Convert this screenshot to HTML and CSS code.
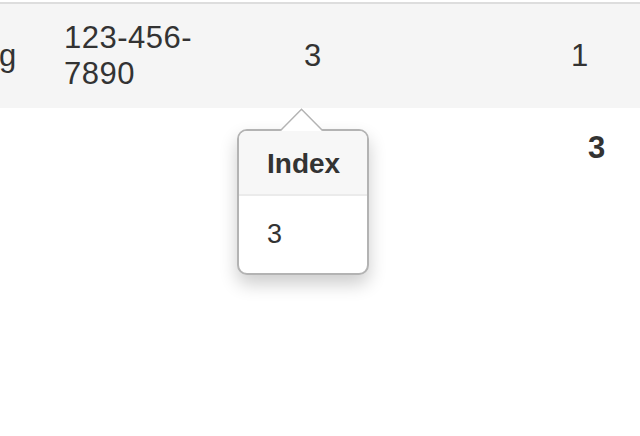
FILE: index.html
```html
<!DOCTYPE html>
<html>
<head>
<meta charset="utf-8">
<link rel="stylesheet" href="styles.css">
</head>
<body>
<div class="page">
  <div class="table">
    <div class="row row-main">
      <div class="cell c1">g</div>
      <div class="cell c2"><span class="wrap">123-456-7890</span></div>
      <div class="cell c3">3</div>
      <div class="cell c4">1</div>
    </div>
    <div class="row row-total">
      <div class="cell c1"></div>
      <div class="cell c2"></div>
      <div class="cell c3"></div>
      <div class="cell c4 total">3</div>
    </div>
  </div>
  <div class="popover">
    <svg class="arrow" width="44" height="24" viewBox="0 0 44 24">
      <polygon points="0.5,23 21.5,1.2 42.5,23" fill="#fff"/>
      <polyline points="0.5,22.5 21.5,1.2 42.5,22.5" fill="none" stroke="#b3b3b3" stroke-width="1.5"/>
    </svg>
    <div class="pop-title">Index</div>
    <div class="pop-content">3</div>
  </div>
</div>
</body>
</html>
```

FILE: styles.css
```css
html, body {
  margin: 0;
  padding: 0;
  background: #fff;
}
body {
  font-family: "Liberation Sans", Arial, sans-serif;
  color: #333;
}
.page {
  position: relative;
  width: 640px;
  height: 436px;
  overflow: hidden;
}
.table {
  margin-top: 2px;
  border-top: 2px solid #dddddd;
}
.row {
  display: grid;
  grid-template-columns: 64px 240px 267px 69px;
  font-size: 31px;
  line-height: 36px;
}
.row-main {
  background: #f5f5f5;
  height: 104px;
  align-items: center;
}
.row-total {
  padding-top: 22px;
  height: 60px;
}
.cell {
  white-space: nowrap;
}
.c2 {
  white-space: normal;
}
.wrap {
  display: block;
  width: 150px;
  letter-spacing: 0.5px;
}
.c1 {
  margin-left: -1px;
}
.total {
  font-weight: bold;
  padding-left: 17px;
}
.popover {
  position: absolute;
  left: 237px;
  top: 129px;
  width: 128px;
  height: 142px;
  background: #fff;
  border: 2px solid #b3b3b3;
  border-radius: 10px;
  box-shadow: 0 9px 18px rgba(0, 0, 0, 0.2);
}
.arrow {
  position: absolute;
  left: 41px;
  top: -23px;
  display: block;
}
.pop-title {
  background: #f7f7f7;
  border-bottom: 2px solid #ebebeb;
  border-radius: 8px 8px 0 0;
  font-size: 28px;
  font-weight: bold;
  line-height: 32px;
  padding: 17px 26px 14px 28px;
}
.pop-content {
  font-size: 27px;
  line-height: 32px;
  padding: 22px 27px 0 28px;
}
```
